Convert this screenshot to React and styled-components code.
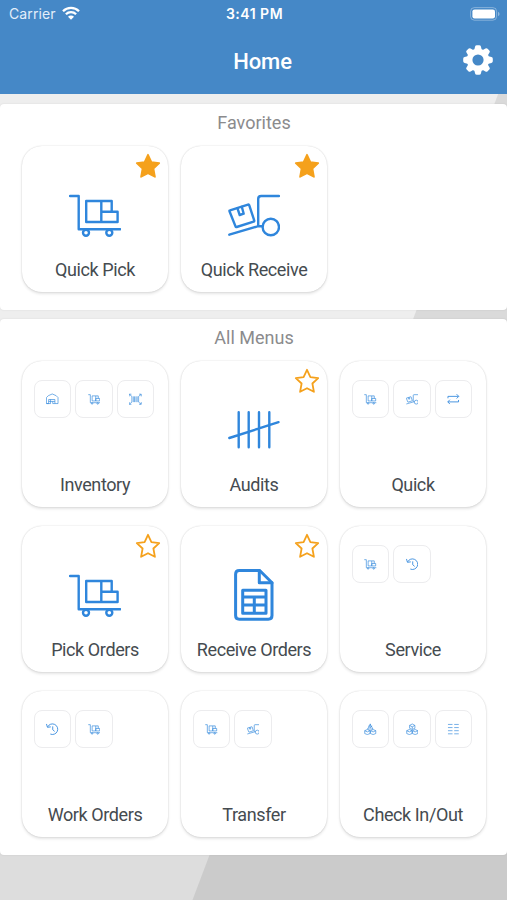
import React from 'react';
import styled, { createGlobalStyle } from 'styled-components';

const BLUE = '#2f86dc';
const ORANGE = '#f5a11c';

const iconPaths = {
  cart: (
    <>
      <path d="M1 7h8.7v33.3h41.6" />
      <path d="M17.2 12h15.1v21H17.2zM32.3 12h10.4v10.8M32.3 22.8h16.3V33H32.3z" />
      <circle cx="17" cy="43.7" r="3" />
      <circle cx="40.3" cy="43.7" r="3" />
    </>
  ),
  dolly: (
    <>
      <path d="M51 7H33.2q-3 0-3 3v27.2h4.5M1.3 45.7l28.9-8.5" />
      <path d="M2 21.3 20 15.6q.9-.3 1.2.6l5 15.2q.3.9-.6 1.2L8.7 38q-.9.3-1.2-.6l-6-15.2q-.3-.7.5-.9z" />
      <path d="m9.4 19.2 2.3 6.8 4-1.3-1.9-6.9" />
      <circle cx="42.8" cy="38" r="8.2" />
    </>
  ),
  tally: (
    <path d="M10.7 8.3v35M20.7 8.3v35M31 8.3v35M41.3 8.3v35M1.3 34l49.2-15.8" />
  ),
  sheet: (
    <g strokeWidth="3">
      <path d="M11.3 1.5h20.4L44 13.8v32.7q0 3.7-3.7 3.7h-29q-3.7 0-3.7-3.7V5.2q0-3.7 3.7-3.7z" />
      <path d="M31.3 1.5v12.2H44M14.7 21.2H38v23H14.7zM14.7 28H38M14.7 36H38M26.3 28v16" />
    </g>
  ),
  warehouse: (
    <>
      <path d="M2 44V19q3-8 24-15 21 7 24 15v25H37V27H11v17z" />
      <path d="M11 35h26M19 27v17H2M28 35v9h9" />
    </>
  ),
  barcode: (
    <>
      <path d="M1 14V5h9M42 5h9v9M51 38v9h-9M10 47H1v-9" />
      <path d="M2 6l10 8M50 6l-10 8M50 46l-10-8M2 46l10-8" />
      <path d="M12 14v24M18 14v24M23 14v24M29 14v24M34 14v24M40 14v24" />
    </>
  ),
  swap: (
    <g strokeWidth="3.6">
      <path d="M4 22v-8h44M40 5l9 9-9 9" />
      <path d="M48 29v8H4M12 28l-9 9 9 9" />
    </g>
  ),
  history: (
    <g strokeWidth="3.6">
      <path d="M7 16A22 22 0 1 1 18 46M2 4l4 14 14-2" />
      <path d="M28 14v14l8 7" />
    </g>
  ),
  checkIn: (
    <>
      <path d="M26 3v16M18 12l8 8 8-8M15 25 26 5l11 20z" />
      <path d="M14 27l11 5v12l-11 4-11-4V32zM38 27l11 5v12l-11 4-11-4V32zM3 32l11 5 11-5M27 32l11 5 11-5" />
    </>
  ),
  checkOut: (
    <>
      <path d="M26 4l11 6v12l-11 5-11-5V10zM15 10l11 6 11-6M26 16v11" />
      <path d="M14 27l11 5v12l-11 4-11-4V32zM38 27l11 5v12l-11 4-11-4V32zM3 32l11 5 11-5M27 32l11 5 11-5" />
    </>
  ),
  list: (
    <path d="M4 6h19M4 19h19M4 32h19M4 45h19M30 6h19M30 19h19M30 32h19M30 45h19" />
  )
};

const favorites = [
  { label: 'Quick Pick', icon: 'cart', starred: true },
  { label: 'Quick Receive', icon: 'dolly', starred: true }
];

const menus = [
  { label: 'Inventory', children: ['warehouse', 'cart', 'barcode'] },
  { label: 'Audits', icon: 'tally' },
  { label: 'Quick', children: ['cart', 'dolly', 'swap'] },
  { label: 'Pick Orders', icon: 'cart' },
  { label: 'Receive Orders', icon: 'sheet' },
  { label: 'Service', children: ['cart', 'history'] },
  { label: 'Work Orders', children: ['history', 'cart'] },
  { label: 'Transfer', children: ['cart', 'dolly'] },
  { label: 'Check In/Out', children: ['checkIn', 'checkOut', 'list'] }
];

const Star = ({ filled }) => (
  <StarIcon viewBox="0 0 26 26" $filled={filled}>
    <path d="M13 1.8l3.4 7.3 7.8 1-5.8 5.4 1.5 8.3-6.9-3.6-6.9 3.6 1.5-8.3-5.8-5.4 7.8-1z" />
  </StarIcon>
);

const MenuTile = ({ label, icon, children, starred }) => (
  <Tile>
    {icon && <Star filled={starred} />}
    {icon ? (
      <TileIcon viewBox="0 0 52 52">{iconPaths[icon]}</TileIcon>
    ) : (
      <FolderPreview>
        {children.map(name => (
          <MiniTile key={name}>
            <MiniIcon viewBox="0 0 52 52">{iconPaths[name]}</MiniIcon>
          </MiniTile>
        ))}
      </FolderPreview>
    )}
    <TileLabel>{label}</TileLabel>
  </Tile>
);

const teeth = [0, 45, 90, 135, 180, 225, 270, 315];

const Gear = () => (
  <GearIcon viewBox="-15 -15 30 30">
    <circle r="8.4" fill="none" stroke="#fff" strokeWidth="5.6" />
    {teeth.map(angle => (
      <path
        key={angle}
        d="M-3.9-9.5-2.9-13.4q.3-1.4 1.7-1.4h2.4q1.4 0 1.7 1.4L3.9-9.5z"
        fill="#fff"
        transform={`rotate(${angle})`}
      />
    ))}
  </GearIcon>
);

const App = () => (
  <>
    <GlobalStyle />
    <Screen>
      <Header>
        <StatusBar>
          <Carrier>
            Carrier
            <WifiIcon viewBox="0 0 18 14">
              <path d="M1 5.2a11.3 11.3 0 0 1 16 0" />
              <path d="M3.9 8.3a7.2 7.2 0 0 1 10.2 0" />
              <path d="M9 13.8 6 10.7a4.2 4.2 0 0 1 6 0z" fill="#fff" stroke="none" />
            </WifiIcon>
          </Carrier>
          <Clock>3:41 PM</Clock>
          <Battery>
            <BatteryIcon viewBox="0 0 30 14">
              <rect x=".6" y=".6" width="26" height="12.6" rx="3.8" fill="none" stroke="#fff" strokeOpacity=".35" />
              <rect x="2.4" y="2.4" width="22.6" height="9" rx="2.2" fill="#fff" />
              <path d="M28 4.8q1.6.7 1.6 2.2T28 9.2z" fill="#fff" fillOpacity=".4" />
            </BatteryIcon>
          </Battery>
        </StatusBar>
        <NavBar>
          <NavTitle>Home</NavTitle>
          <Gear />
        </NavBar>
      </Header>
      <Panels>
        <Panel $height={206}>
          <PanelTitle>Favorites</PanelTitle>
          <TileGrid>
            {favorites.map(item => (
              <MenuTile key={item.label} {...item} />
            ))}
          </TileGrid>
        </Panel>
        <Panel $height={536}>
          <PanelTitle>All Menus</PanelTitle>
          <TileGrid>
            {menus.map(item => (
              <MenuTile key={item.label} {...item} />
            ))}
          </TileGrid>
        </Panel>
      </Panels>
    </Screen>
  </>
);

const GlobalStyle = createGlobalStyle`
  * {
    box-sizing: border-box;
  }

  body {
    margin: 0;
    font-family: Roboto, sans-serif;
  }
`;

const Screen = styled.div`
  position: relative;
  isolation: isolate;
  display: flex;
  flex-direction: column;
  width: 507px;
  height: 900px;
  overflow: hidden;
  background: linear-gradient(
    110.7deg,
    #eeeeee calc(50% + 102.5px),
    #dadada calc(50% + 103.5px)
  );

  /* darker lower half of the backdrop */
  &::before {
    content: '';
    position: absolute;
    inset: 0;
    z-index: -1;
    background: linear-gradient(
      110.7deg,
      #dddddd calc(50% + 101.5px),
      #cbcbcb calc(50% + 102.5px)
    );
    clip-path: inset(600px 0 0 0);
  }
`;

const Header = styled.header`
  height: 94px;
  flex: none;
  background: #4588c7;
  color: #fff;
`;

const StatusBar = styled.div`
  display: grid;
  grid-template-columns: 1fr auto 1fr;
  align-items: center;
  height: 27px;
  padding: 0 7px 0 9px;
  font-family: Inter, sans-serif;
  font-size: 14px;
`;

const Carrier = styled.div`
  display: flex;
  align-items: center;
  letter-spacing: 0.1px;
  color: #e3eefa;
`;

const WifiIcon = styled.svg`
  width: 18px;
  height: 14px;
  margin-left: 6px;
  margin-top: -2px;
  fill: none;
  stroke: #fff;
  stroke-width: 2.3;
`;

const Clock = styled.div`
  font-weight: 600;
  font-size: 14px;
  letter-spacing: 0.5px;
`;

const Battery = styled.div`
  display: flex;
  justify-content: flex-end;
`;

const BatteryIcon = styled.svg`
  width: 30px;
  height: 14px;
`;

const NavBar = styled.div`
  display: grid;
  grid-template-columns: 1fr auto 1fr;
  align-items: center;
  height: 67px;
  padding: 0 14px 2px 32px;
`;

const NavTitle = styled.h1`
  grid-column: 2;
  margin: 3px 0 0;
  font-size: 22px;
  font-weight: 500;
  letter-spacing: -0.1px;
`;

const GearIcon = styled.svg`
  width: 30px;
  height: 30px;
  justify-self: end;
`;

const Panels = styled.main`
  display: flex;
  flex-direction: column;
  gap: 9px;
  padding-top: 10px;
`;

const Panel = styled.section`
  height: ${({ $height }) => $height}px;
  padding: 0 21px 0 22px;
  background: #fff;
  border-radius: 4px;
  box-shadow: 0 0 2px rgba(0, 0, 0, 0.1);
`;

const PanelTitle = styled.h2`
  height: 42px;
  margin: 0;
  padding-top: 1px;
  font-size: 18px;
  font-weight: 400;
  line-height: 36px;
  text-align: center;
  color: #8b8b8d;
`;

const TileGrid = styled.div`
  display: grid;
  grid-template-columns: repeat(3, 146px);
  gap: 19px 13px;
`;

const Tile = styled.div`
  position: relative;
  display: flex;
  flex-direction: column;
  justify-content: space-between;
  height: 146px;
  padding-bottom: 10px;
  background: #fff;
  border-radius: 20px;
  box-shadow: 0 0 1.5px rgba(0, 0, 0, 0.2), 0 2px 3px rgba(0, 0, 0, 0.1);
`;

const StarIcon = styled.svg`
  position: absolute;
  top: 7px;
  right: 7px;
  width: 26px;
  height: 26px;
  fill: ${({ $filled }) => ($filled ? ORANGE : 'none')};
  stroke: ${ORANGE};
  stroke-width: 1.8;
  stroke-linejoin: round;
`;

const TileIcon = styled.svg`
  width: 52px;
  height: 52px;
  margin: 43px auto 0;
  fill: none;
  stroke: ${BLUE};
  stroke-width: 2.4;
  stroke-linecap: round;
  stroke-linejoin: round;
`;

const FolderPreview = styled.div`
  display: flex;
  gap: 4px;
  padding: 19px 0 0 11.5px;
`;

const MiniTile = styled.div`
  display: flex;
  align-items: center;
  justify-content: center;
  width: 37.5px;
  height: 38px;
  border: 1px solid #ececee;
  border-radius: 8px;
`;

const MiniIcon = styled.svg`
  width: 12.5px;
  height: 12.5px;
  fill: none;
  stroke: ${BLUE};
  stroke-width: 2.7;
  stroke-linejoin: round;
`;

const TileLabel = styled.div`
  font-size: 18px;
  line-height: 24px;
  letter-spacing: -0.4px;
  text-align: center;
  color: #454b50;
`;

export default App;
